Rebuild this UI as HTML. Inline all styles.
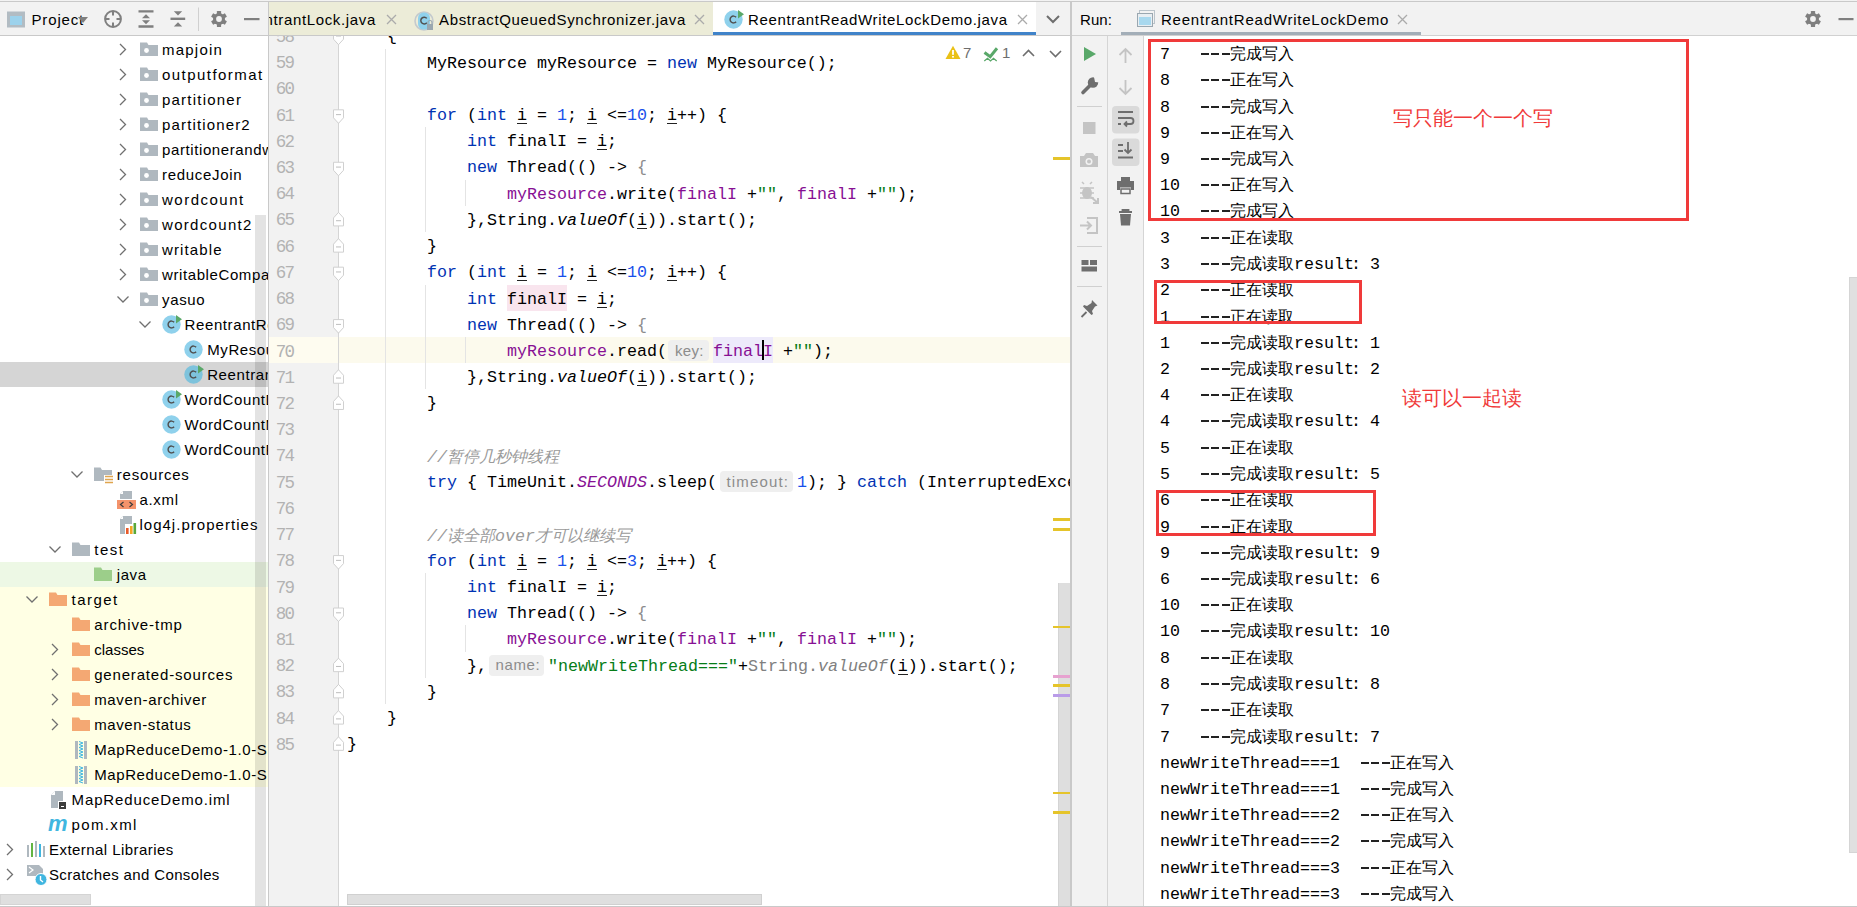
<!DOCTYPE html><html><head><meta charset="utf-8"><style>
*{margin:0;padding:0;box-sizing:border-box}
html,body{width:1857px;height:907px;overflow:hidden;background:#fff}
body{position:relative;font-family:'Liberation Sans', sans-serif;color:#000}
.a{position:absolute}
.ui{font-family:'Liberation Sans', sans-serif;font-size:16px;white-space:pre;line-height:20px}
.mono{font-family:'Liberation Mono', monospace;font-size:16.67px;white-space:pre;line-height:26px}
.kw{color:#0033B3}
.num{color:#1750EB}
.fld{color:#871094}
.it{font-style:italic}
.cmt{color:#9A9A9A;font-style:italic}
.str{color:#067D17}
.gry{color:#8C8C8C}
.u{background:linear-gradient(#222,#222) no-repeat 0 calc(100% - 1px)/100% 1px}
.inl{display:inline-block;background:#EBEBEB;color:#808080;font-family:'Liberation Sans', sans-serif;font-size:15px;border-radius:4px;line-height:20px;vertical-align:1px;text-align:center}
.cjk{display:inline-block;font-family:'Liberation Sans', sans-serif;font-size:16px;letter-spacing:0}
</style></head><body>
<div class="a" style="left:0;top:0;width:1857px;height:1px;background:#F2F2F2"></div>
<div class="a" style="left:0;top:1px;width:1857px;height:1px;background:#C9C9C9"></div>
<div class="a" style="left:0;top:2px;width:268px;height:33px;background:#F2F2F2"></div>
<div class="a" style="left:269px;top:2px;width:444px;height:33px;background:#ECECD8"></div>
<div class="a" style="left:713px;top:2px;width:323px;height:33px;background:#fff"></div>
<div class="a" style="left:713px;top:32px;width:323px;height:3px;background:#4083C9"></div>
<div class="a" style="left:1036px;top:2px;width:34px;height:33px;background:#F2F2F2"></div>
<div class="a" style="left:1072px;top:2px;width:785px;height:33px;background:#F2F2F2"></div>
<div class="a" style="left:0;top:35px;width:1070px;height:1px;background:#C9C9C9"></div>
<div class="a" style="left:1072px;top:35px;width:785px;height:1px;background:#D1D1D1"></div>
<div class="a" style="left:268px;top:2px;width:1px;height:904px;background:#C9C9C9"></div>
<div class="a" style="left:1070px;top:2px;width:2px;height:904px;background:#C9C9C9"></div>
<div class="a" style="left:0;top:906px;width:1857px;height:1px;background:#C9C9C9"></div>
<svg class="a" style="left:0;top:0" width="268" height="35"><rect x="7" y="11.5" width="18" height="16" fill="#B2BCC3"/><rect x="10" y="16" width="12" height="9" fill="#9CD2EC"/><circle cx="113" cy="19" r="7.9" fill="none" stroke="#7F7F7F" stroke-width="2"/><path d="M113 11 V15.5 M113 22.5 V27 M105 19 H109.5 M116.5 19 H121" stroke="#7F7F7F" stroke-width="2"/><path d="M138.5 11.4 H153.5 M138.5 26.5 H153.5" stroke="#7F7F7F" stroke-width="2.4"/><path d="M142 18.3 L146 14.2 L150 18.3 Z M142 20.2 L146 24.3 L150 20.2 Z" fill="#7F7F7F"/><path d="M170.5 18.8 H185.2" stroke="#7F7F7F" stroke-width="2.4"/><path d="M173.8 11.3 L178 15.6 L182.2 11.3 Z M173.8 26.6 L178 22.3 L182.2 26.6 Z" fill="#7F7F7F"/><rect x="198" y="7.5" width="1" height="23.5" fill="#D0D0D0"/><g transform="translate(219,19)"><circle r="6" fill="#7F7F7F"/><rect x="-2.1" y="-8" width="4.2" height="4.5" rx="0.6" fill="#7F7F7F" transform="rotate(0)"/><rect x="-2.1" y="-8" width="4.2" height="4.5" rx="0.6" fill="#7F7F7F" transform="rotate(60)"/><rect x="-2.1" y="-8" width="4.2" height="4.5" rx="0.6" fill="#7F7F7F" transform="rotate(120)"/><rect x="-2.1" y="-8" width="4.2" height="4.5" rx="0.6" fill="#7F7F7F" transform="rotate(180)"/><rect x="-2.1" y="-8" width="4.2" height="4.5" rx="0.6" fill="#7F7F7F" transform="rotate(240)"/><rect x="-2.1" y="-8" width="4.2" height="4.5" rx="0.6" fill="#7F7F7F" transform="rotate(300)"/><circle r="2.9" fill="#F2F2F2"/></g><rect x="244" y="18" width="15.5" height="2.2" fill="#7F7F7F"/></svg>
<div class="a ui" style="left:31.5px;top:9.8px;font-size:15px;letter-spacing:0.85px">Project</div>
<svg class="a" style="left:76px;top:15px" width="14" height="10"><path d="M2 2 L12 2 L7 8 Z" fill="#7F7F7F"/></svg>
<div class="a ui" style="left:269px;top:10px;width:444px;height:24px;overflow:hidden"><span class="a" style="left:-34px;top:0;font-size:15px;letter-spacing:0.65px">ReentrantLock.java</span></div>
<svg class="a" style="left:386px;top:14px" width="11" height="11"><path d="M1 1 L10 10 M10 1 L1 10" stroke="#ABABAB" stroke-width="1.3"/></svg>
<svg class="a" style="left:414px;top:10px" width="22" height="22"><circle cx="10" cy="11" r="9" fill="none" stroke="#C4CACE" stroke-width="1.6"/><rect x="4" y="2.5" width="12" height="17" rx="5.5" fill="#8FD1EC"/><path d="M12.8 8.4 A3.4 3.4 0 1 0 12.8 12.8" fill="none" stroke="#505050" stroke-width="1.45"/><path d="M14 14 V12.5 A2 2 0 0 1 18 12.5 V14" fill="none" stroke="#9AA7B0" stroke-width="1.2"/><rect x="13" y="14" width="6" height="6" fill="#9AA7B0"/></svg>
<div class="a ui" style="left:439px;top:10px;font-size:15px;letter-spacing:0.65px">AbstractQueuedSynchronizer.java</div>
<svg class="a" style="left:694px;top:14px" width="11" height="11"><path d="M1 1 L10 10 M10 1 L1 10" stroke="#ABABAB" stroke-width="1.3"/></svg>
<svg class="a" style="left:724px;top:8px" width="22" height="22"><circle cx="9.5" cy="11.5" r="9.2" fill="#8FD1EC"/><path d="M12.1 9.3 A3.4 3.4 0 1 0 12.1 13.7" fill="none" stroke="#505050" stroke-width="1.45"/><path d="M14 2 L20 6.2 L14 10.4 Z" fill="#59A869"/></svg>
<div class="a ui" style="left:748px;top:10px;font-size:15px;letter-spacing:0.64px">ReentrantReadWriteLockDemo.java</div>
<svg class="a" style="left:1017px;top:14px" width="11" height="11"><path d="M1 1 L10 10 M10 1 L1 10" stroke="#ABABAB" stroke-width="1.3"/></svg>
<svg class="a" style="left:1045px;top:13px" width="16" height="12"><path d="M2 3 L8 9 L14 3" fill="none" stroke="#6E6E6E" stroke-width="2"/></svg>
<div class="a ui" style="left:1080px;top:10px;font-size:15px;letter-spacing:0.1px">Run:</div>
<svg class="a" style="left:1136px;top:9px" width="20" height="20"><rect x="3.5" y="1.5" width="15" height="13" fill="none" stroke="#B9C3CA" stroke-width="1"/><rect x="1.5" y="4.5" width="15" height="13" fill="#E8EEF2" stroke="#9AA7B0" stroke-width="1"/><rect x="3" y="8" width="12" height="8" fill="#A8D8EE"/></svg>
<div class="a ui" style="left:1161px;top:10px;font-size:15px;letter-spacing:0.77px">ReentrantReadWriteLockDemo</div>
<svg class="a" style="left:1397px;top:14px" width="11" height="11"><path d="M1 1 L10 10 M10 1 L1 10" stroke="#ABABAB" stroke-width="1.3"/></svg>
<div class="a" style="left:1121px;top:32px;width:300px;height:3px;background:#A3AEB8"></div>
<svg class="a" style="left:1790px;top:0" width="67" height="35"><g transform="translate(23,19)"><circle r="6" fill="#7F7F7F"/><rect x="-2.1" y="-8" width="4.2" height="4.5" rx="0.6" fill="#7F7F7F" transform="rotate(0)"/><rect x="-2.1" y="-8" width="4.2" height="4.5" rx="0.6" fill="#7F7F7F" transform="rotate(60)"/><rect x="-2.1" y="-8" width="4.2" height="4.5" rx="0.6" fill="#7F7F7F" transform="rotate(120)"/><rect x="-2.1" y="-8" width="4.2" height="4.5" rx="0.6" fill="#7F7F7F" transform="rotate(180)"/><rect x="-2.1" y="-8" width="4.2" height="4.5" rx="0.6" fill="#7F7F7F" transform="rotate(240)"/><rect x="-2.1" y="-8" width="4.2" height="4.5" rx="0.6" fill="#7F7F7F" transform="rotate(300)"/><circle r="2.9" fill="#F2F2F2"/></g><rect x="48.5" y="18" width="15" height="2.2" fill="#7F7F7F"/></svg>
<div class="a" style="left:0;top:362px;width:268px;height:25px;background:#D5D5D5"></div>
<div class="a" style="left:0;top:562px;width:268px;height:25px;background:#EDF8E5"></div>
<div class="a" style="left:0;top:587px;width:268px;height:200px;background:#FFFFE4"></div>
<div class="a" style="left:0;top:36px;width:268px;height:870px;overflow:hidden"><div class="a" style="left:0;top:-36px;width:268px;height:906px">
<svg class="a" style="left:116.5px;top:37px" width="12" height="25"><path d="M3 7 L8.5 12.5 L3 18" fill="none" stroke="#707070" stroke-width="1.3"/></svg>
<svg class="a" style="left:139.5px;top:37px" width="20" height="25"><path d="M0 5.5 H7 L8.5 8 H18 V19 H0 Z" fill="#AFB8BF"/><circle cx="6.5" cy="13.5" r="2.4" fill="#fff"/></svg>
<div class="a ui" style="left:162.0px;top:39.6px;font-size:15px;letter-spacing:1.220px">mapjoin</div>
<svg class="a" style="left:116.5px;top:62px" width="12" height="25"><path d="M3 7 L8.5 12.5 L3 18" fill="none" stroke="#707070" stroke-width="1.3"/></svg>
<svg class="a" style="left:139.5px;top:62px" width="20" height="25"><path d="M0 5.5 H7 L8.5 8 H18 V19 H0 Z" fill="#AFB8BF"/><circle cx="6.5" cy="13.5" r="2.4" fill="#fff"/></svg>
<div class="a ui" style="left:162.0px;top:64.6px;font-size:15px;letter-spacing:1.452px">outputformat</div>
<svg class="a" style="left:116.5px;top:87px" width="12" height="25"><path d="M3 7 L8.5 12.5 L3 18" fill="none" stroke="#707070" stroke-width="1.3"/></svg>
<svg class="a" style="left:139.5px;top:87px" width="20" height="25"><path d="M0 5.5 H7 L8.5 8 H18 V19 H0 Z" fill="#AFB8BF"/><circle cx="6.5" cy="13.5" r="2.4" fill="#fff"/></svg>
<div class="a ui" style="left:162.0px;top:89.6px;font-size:15px;letter-spacing:1.220px">partitioner</div>
<svg class="a" style="left:116.5px;top:112px" width="12" height="25"><path d="M3 7 L8.5 12.5 L3 18" fill="none" stroke="#707070" stroke-width="1.3"/></svg>
<svg class="a" style="left:139.5px;top:112px" width="20" height="25"><path d="M0 5.5 H7 L8.5 8 H18 V19 H0 Z" fill="#AFB8BF"/><circle cx="6.5" cy="13.5" r="2.4" fill="#fff"/></svg>
<div class="a ui" style="left:162.0px;top:114.6px;font-size:15px;letter-spacing:1.152px">partitioner2</div>
<svg class="a" style="left:116.5px;top:137px" width="12" height="25"><path d="M3 7 L8.5 12.5 L3 18" fill="none" stroke="#707070" stroke-width="1.3"/></svg>
<svg class="a" style="left:139.5px;top:137px" width="20" height="25"><path d="M0 5.5 H7 L8.5 8 H18 V19 H0 Z" fill="#AFB8BF"/><circle cx="6.5" cy="13.5" r="2.4" fill="#fff"/></svg>
<div class="a ui" style="left:162.0px;top:139.6px;font-size:15px;letter-spacing:0.600px">partitionerandwritableComparable</div>
<svg class="a" style="left:116.5px;top:162px" width="12" height="25"><path d="M3 7 L8.5 12.5 L3 18" fill="none" stroke="#707070" stroke-width="1.3"/></svg>
<svg class="a" style="left:139.5px;top:162px" width="20" height="25"><path d="M0 5.5 H7 L8.5 8 H18 V19 H0 Z" fill="#AFB8BF"/><circle cx="6.5" cy="13.5" r="2.4" fill="#fff"/></svg>
<div class="a ui" style="left:162.0px;top:164.6px;font-size:15px;letter-spacing:0.700px">reduceJoin</div>
<svg class="a" style="left:116.5px;top:187px" width="12" height="25"><path d="M3 7 L8.5 12.5 L3 18" fill="none" stroke="#707070" stroke-width="1.3"/></svg>
<svg class="a" style="left:139.5px;top:187px" width="20" height="25"><path d="M0 5.5 H7 L8.5 8 H18 V19 H0 Z" fill="#AFB8BF"/><circle cx="6.5" cy="13.5" r="2.4" fill="#fff"/></svg>
<div class="a ui" style="left:162.0px;top:189.6px;font-size:15px;letter-spacing:1.495px">wordcount</div>
<svg class="a" style="left:116.5px;top:212px" width="12" height="25"><path d="M3 7 L8.5 12.5 L3 18" fill="none" stroke="#707070" stroke-width="1.3"/></svg>
<svg class="a" style="left:139.5px;top:212px" width="20" height="25"><path d="M0 5.5 H7 L8.5 8 H18 V19 H0 Z" fill="#AFB8BF"/><circle cx="6.5" cy="13.5" r="2.4" fill="#fff"/></svg>
<div class="a ui" style="left:162.0px;top:214.6px;font-size:15px;letter-spacing:1.314px">wordcount2</div>
<svg class="a" style="left:116.5px;top:237px" width="12" height="25"><path d="M3 7 L8.5 12.5 L3 18" fill="none" stroke="#707070" stroke-width="1.3"/></svg>
<svg class="a" style="left:139.5px;top:237px" width="20" height="25"><path d="M0 5.5 H7 L8.5 8 H18 V19 H0 Z" fill="#AFB8BF"/><circle cx="6.5" cy="13.5" r="2.4" fill="#fff"/></svg>
<div class="a ui" style="left:162.0px;top:239.6px;font-size:15px;letter-spacing:1.113px">writable</div>
<svg class="a" style="left:116.5px;top:262px" width="12" height="25"><path d="M3 7 L8.5 12.5 L3 18" fill="none" stroke="#707070" stroke-width="1.3"/></svg>
<svg class="a" style="left:139.5px;top:262px" width="20" height="25"><path d="M0 5.5 H7 L8.5 8 H18 V19 H0 Z" fill="#AFB8BF"/><circle cx="6.5" cy="13.5" r="2.4" fill="#fff"/></svg>
<div class="a ui" style="left:162.0px;top:264.6px;font-size:15px;letter-spacing:0.600px">writableComparable</div>
<svg class="a" style="left:115.5px;top:287px" width="14" height="25"><path d="M1.5 9.5 L7 15 L12.5 9.5" fill="none" stroke="#707070" stroke-width="1.3"/></svg>
<svg class="a" style="left:139.5px;top:287px" width="20" height="25"><path d="M0 5.5 H7 L8.5 8 H18 V19 H0 Z" fill="#AFB8BF"/><circle cx="6.5" cy="13.5" r="2.4" fill="#fff"/></svg>
<div class="a ui" style="left:162.0px;top:289.6px;font-size:15px;letter-spacing:0.670px">yasuo</div>
<svg class="a" style="left:138.1px;top:312px" width="14" height="25"><path d="M1.5 9.5 L7 15 L12.5 9.5" fill="none" stroke="#707070" stroke-width="1.3"/></svg>
<svg class="a" style="left:161.6px;top:313px" width="22" height="22"><circle cx="9.5" cy="11.5" r="9.2" fill="#8FD1EC"/><path d="M12.1 9.3 A3.4 3.4 0 1 0 12.1 13.7" fill="none" stroke="#505050" stroke-width="1.45"/><path d="M14 2 L20 6.2 L14 10.4 Z" fill="#59A869"/></svg>
<div class="a ui" style="left:184.6px;top:314.6px;font-size:15px;letter-spacing:0.600px">ReentrantReadWriteLockDemo</div>
<svg class="a" style="left:184.2px;top:338px" width="22" height="22"><circle cx="9.5" cy="11.5" r="9.2" fill="#8FD1EC"/><path d="M12.1 9.3 A3.4 3.4 0 1 0 12.1 13.7" fill="none" stroke="#505050" stroke-width="1.45"/></svg>
<div class="a ui" style="left:207.2px;top:339.6px;font-size:15px;letter-spacing:0.600px">MyResource</div>
<svg class="a" style="left:184.2px;top:363px" width="22" height="22"><circle cx="9.5" cy="11.5" r="9.2" fill="#7EC3DC"/><path d="M12.1 9.3 A3.4 3.4 0 1 0 12.1 13.7" fill="none" stroke="#505050" stroke-width="1.45"/><path d="M14 2 L20 6.2 L14 10.4 Z" fill="#59A869"/></svg>
<div class="a ui" style="left:207.2px;top:364.6px;font-size:15px;letter-spacing:0.600px">ReentrantReadWriteLockDemo</div>
<svg class="a" style="left:161.6px;top:388px" width="22" height="22"><circle cx="9.5" cy="11.5" r="9.2" fill="#8FD1EC"/><path d="M12.1 9.3 A3.4 3.4 0 1 0 12.1 13.7" fill="none" stroke="#505050" stroke-width="1.45"/><path d="M14 2 L20 6.2 L14 10.4 Z" fill="#59A869"/></svg>
<div class="a ui" style="left:184.6px;top:389.6px;font-size:15px;letter-spacing:0.600px">WordCountDriver</div>
<svg class="a" style="left:161.6px;top:413px" width="22" height="22"><circle cx="9.5" cy="11.5" r="9.2" fill="#8FD1EC"/><path d="M12.1 9.3 A3.4 3.4 0 1 0 12.1 13.7" fill="none" stroke="#505050" stroke-width="1.45"/></svg>
<div class="a ui" style="left:184.6px;top:414.6px;font-size:15px;letter-spacing:0.600px">WordCountMapper</div>
<svg class="a" style="left:161.6px;top:438px" width="22" height="22"><circle cx="9.5" cy="11.5" r="9.2" fill="#8FD1EC"/><path d="M12.1 9.3 A3.4 3.4 0 1 0 12.1 13.7" fill="none" stroke="#505050" stroke-width="1.45"/></svg>
<div class="a ui" style="left:184.6px;top:439.6px;font-size:15px;letter-spacing:0.600px">WordCountReducer</div>
<svg class="a" style="left:70.3px;top:462px" width="14" height="25"><path d="M1.5 9.5 L7 15 L12.5 9.5" fill="none" stroke="#707070" stroke-width="1.3"/></svg>
<svg class="a" style="left:94.3px;top:462px" width="22" height="25"><path d="M0 5.5 H6.5 L8 8 H18 V19 H0 Z" fill="#AFB8BF"/><rect x="10" y="13" width="10" height="10" fill="#fff"/><path d="M11 14.5 H19 M11 17.5 H19 M11 20.5 H19" stroke="#E0A54E" stroke-width="1.5"/></svg>
<div class="a ui" style="left:116.8px;top:464.6px;font-size:15px;letter-spacing:0.770px">resources</div>
<svg class="a" style="left:116.9px;top:487px" width="22" height="25"><path d="M6 4 H15 V12 H3 V7 Z" fill="#AFB8BF"/><path d="M3 7 L6 4 V7 Z" fill="#fff"/><rect x="0" y="13" width="19" height="9" fill="#F4936B"/><path d="M6.5 15 L3.5 17.5 L6.5 20 M12.5 15 L15.5 17.5 L12.5 20" fill="none" stroke="#3C3C3C" stroke-width="1.2"/></svg>
<div class="a ui" style="left:139.4px;top:489.6px;font-size:15px;letter-spacing:0.720px">a.xml</div>
<svg class="a" style="left:116.9px;top:512px" width="22" height="25"><path d="M6 4 H15 V22 H3 V7 Z" fill="#AFB8BF"/><path d="M3 7 L6 4 V7 Z" fill="#fff"/><rect x="8" y="12" width="11" height="11" fill="#fff"/><rect x="9" y="16" width="2.6" height="6" fill="#E85A2A"/><rect x="13" y="14" width="2.6" height="8" fill="#F5A623"/><rect x="16.5" y="11" width="2.6" height="11" fill="#59A83A"/></svg>
<div class="a ui" style="left:139.4px;top:514.6px;font-size:15px;letter-spacing:1.030px">log4j.properties</div>
<svg class="a" style="left:47.7px;top:537px" width="14" height="25"><path d="M1.5 9.5 L7 15 L12.5 9.5" fill="none" stroke="#707070" stroke-width="1.3"/></svg>
<svg class="a" style="left:71.7px;top:537px" width="20" height="25"><path d="M0 5.5 H7 L8.5 8 H18 V19 H0 Z" fill="#AFB8BF"/></svg>
<div class="a ui" style="left:94.2px;top:539.6px;font-size:15px;letter-spacing:1.537px">test</div>
<svg class="a" style="left:94.3px;top:562px" width="20" height="25"><path d="M0 5.5 H7 L8.5 8 H18 V19 H0 Z" fill="#9CCE8A"/></svg>
<div class="a ui" style="left:116.8px;top:564.6px;font-size:15px;letter-spacing:0.570px">java</div>
<svg class="a" style="left:25.1px;top:587px" width="14" height="25"><path d="M1.5 9.5 L7 15 L12.5 9.5" fill="none" stroke="#707070" stroke-width="1.3"/></svg>
<svg class="a" style="left:49.1px;top:587px" width="20" height="25"><path d="M0 5.5 H7 L8.5 8 H18 V19 H0 Z" fill="#F4A873"/></svg>
<div class="a ui" style="left:71.6px;top:589.6px;font-size:15px;letter-spacing:1.430px">target</div>
<svg class="a" style="left:71.7px;top:612px" width="20" height="25"><path d="M0 5.5 H7 L8.5 8 H18 V19 H0 Z" fill="#F4A873"/></svg>
<div class="a ui" style="left:94.2px;top:614.6px;font-size:15px;letter-spacing:0.940px">archive-tmp</div>
<svg class="a" style="left:48.7px;top:637px" width="12" height="25"><path d="M3 7 L8.5 12.5 L3 18" fill="none" stroke="#707070" stroke-width="1.3"/></svg>
<svg class="a" style="left:71.7px;top:637px" width="20" height="25"><path d="M0 5.5 H7 L8.5 8 H18 V19 H0 Z" fill="#F4A873"/></svg>
<div class="a ui" style="left:94.2px;top:639.6px;font-size:15px;letter-spacing:0.020px">classes</div>
<svg class="a" style="left:48.7px;top:662px" width="12" height="25"><path d="M3 7 L8.5 12.5 L3 18" fill="none" stroke="#707070" stroke-width="1.3"/></svg>
<svg class="a" style="left:71.7px;top:662px" width="20" height="25"><path d="M0 5.5 H7 L8.5 8 H18 V19 H0 Z" fill="#F4A873"/></svg>
<div class="a ui" style="left:94.2px;top:664.6px;font-size:15px;letter-spacing:0.826px">generated-sources</div>
<svg class="a" style="left:48.7px;top:687px" width="12" height="25"><path d="M3 7 L8.5 12.5 L3 18" fill="none" stroke="#707070" stroke-width="1.3"/></svg>
<svg class="a" style="left:71.7px;top:687px" width="20" height="25"><path d="M0 5.5 H7 L8.5 8 H18 V19 H0 Z" fill="#F4A873"/></svg>
<div class="a ui" style="left:94.2px;top:689.6px;font-size:15px;letter-spacing:0.670px">maven-archiver</div>
<svg class="a" style="left:48.7px;top:712px" width="12" height="25"><path d="M3 7 L8.5 12.5 L3 18" fill="none" stroke="#707070" stroke-width="1.3"/></svg>
<svg class="a" style="left:71.7px;top:712px" width="20" height="25"><path d="M0 5.5 H7 L8.5 8 H18 V19 H0 Z" fill="#F4A873"/></svg>
<div class="a ui" style="left:94.2px;top:714.6px;font-size:15px;letter-spacing:0.600px">maven-status</div>
<svg class="a" style="left:71.7px;top:737px" width="22" height="25"><rect x="3" y="4" width="3" height="18" fill="#AFB8BF"/><rect x="12" y="4" width="3" height="18" fill="#AFB8BF"/><path d="M7 4.5 L11 6 L7 7.5 L11 9 L7 10.5 L11 12 L7 13.5 L11 15 L7 16.5 L11 18 L7 19.5 L11 21" fill="none" stroke="#40B6E0" stroke-width="1"/></svg>
<div class="a ui" style="left:94.2px;top:739.6px;font-size:15px;letter-spacing:0.600px">MapReduceDemo-1.0-SNAPSHOT.jar</div>
<svg class="a" style="left:71.7px;top:762px" width="22" height="25"><rect x="3" y="4" width="3" height="18" fill="#AFB8BF"/><rect x="12" y="4" width="3" height="18" fill="#AFB8BF"/><path d="M7 4.5 L11 6 L7 7.5 L11 9 L7 10.5 L11 12 L7 13.5 L11 15 L7 16.5 L11 18 L7 19.5 L11 21" fill="none" stroke="#40B6E0" stroke-width="1"/></svg>
<div class="a ui" style="left:94.2px;top:764.6px;font-size:15px;letter-spacing:0.600px">MapReduceDemo-1.0-SNAPSHOT-jar-with-dependencies.jar</div>
<svg class="a" style="left:49.1px;top:787px" width="22" height="25"><path d="M6 4 H14 V21 H2 V8 Z" fill="#AFB8BF"/><path d="M2 8 L6 4 V8 Z" fill="#fff"/><rect x="9" y="14" width="9" height="9" fill="#fff"/><rect x="10" y="15" width="7" height="7" fill="#3C3C3C"/><rect x="12" y="19" width="3" height="1" fill="#fff"/></svg>
<div class="a ui" style="left:71.6px;top:789.6px;font-size:15px;letter-spacing:0.864px">MapReduceDemo.iml</div>
<div class="a" style="left:48.1px;top:811px;font-family:'Liberation Sans', sans-serif;font-weight:bold;font-style:italic;font-size:22px;color:#40B6E0;line-height:25px">m</div>
<div class="a ui" style="left:71.6px;top:814.6px;font-size:15px;letter-spacing:1.337px">pom.xml</div>
<svg class="a" style="left:3.5px;top:837px" width="12" height="25"><path d="M3 7 L8.5 12.5 L3 18" fill="none" stroke="#707070" stroke-width="1.3"/></svg>
<svg class="a" style="left:26.5px;top:837px" width="22" height="25"><rect x="0" y="8" width="2" height="12" fill="#AFB8BF"/><rect x="4" y="6" width="2" height="14" fill="#62B543"/><rect x="8" y="4" width="2" height="16" fill="#AFB8BF"/><rect x="12" y="7" width="2" height="13" fill="#40B6E0"/><rect x="16" y="9" width="2" height="11" fill="#AFB8BF"/></svg>
<div class="a ui" style="left:49.0px;top:839.6px;font-size:15px;letter-spacing:0.446px">External Libraries</div>
<svg class="a" style="left:3.5px;top:862px" width="12" height="25"><path d="M3 7 L8.5 12.5 L3 18" fill="none" stroke="#707070" stroke-width="1.3"/></svg>
<svg class="a" style="left:26.5px;top:862px" width="22" height="25"><path d="M0 3 H12 L16 7 V14 H0 Z" fill="#AFB8BF"/><path d="M2 5 L6 8 L2 11" fill="none" stroke="#fff" stroke-width="1.2"/><circle cx="14" cy="17.5" r="6" fill="#40B6E0" stroke="#fff" stroke-width="1"/><path d="M13.5 14 V18 L16 20" fill="none" stroke="#fff" stroke-width="1.4"/></svg>
<div class="a ui" style="left:49.0px;top:864.6px;font-size:15px;letter-spacing:0.370px">Scratches and Consoles</div>
</div></div>
<div class="a" style="left:255px;top:215px;width:11px;height:691px;background:rgba(0,0,0,0.11)"></div>
<div class="a" style="left:0;top:894px;width:91px;height:11px;background:#DFDFDF;border:1px solid #D4D4D4"></div>
<div class="a" style="left:269px;top:36px;width:70px;height:870px;background:#F2F2F2"></div>
<div class="a" style="left:269px;top:337.02px;width:70px;height:26px;background:#FEFCF0"></div>
<div class="a" style="left:339px;top:337.02px;width:731px;height:26px;background:#FCFAED"></div>
<div class="a" style="left:338px;top:36px;width:1px;height:870px;background:#D5D5D5"></div>
<div class="a" style="left:269px;top:36px;width:801px;height:870px;overflow:hidden"><div class="a" style="left:-269px;top:-36px;width:1070px;height:906px">
<div class="a mono" style="left:253px;top:23.88px;width:40px;text-align:right;color:#B2B2B2;font-size:17.5px;letter-spacing:-1.9px;line-height:26px">58</div>
<div class="a mono" style="left:253px;top:50.10px;width:40px;text-align:right;color:#B2B2B2;font-size:17.5px;letter-spacing:-1.9px;line-height:26px">59</div>
<div class="a mono" style="left:253px;top:76.32px;width:40px;text-align:right;color:#B2B2B2;font-size:17.5px;letter-spacing:-1.9px;line-height:26px">60</div>
<div class="a mono" style="left:253px;top:102.54px;width:40px;text-align:right;color:#B2B2B2;font-size:17.5px;letter-spacing:-1.9px;line-height:26px">61</div>
<div class="a mono" style="left:253px;top:128.76px;width:40px;text-align:right;color:#B2B2B2;font-size:17.5px;letter-spacing:-1.9px;line-height:26px">62</div>
<div class="a mono" style="left:253px;top:154.98px;width:40px;text-align:right;color:#B2B2B2;font-size:17.5px;letter-spacing:-1.9px;line-height:26px">63</div>
<div class="a mono" style="left:253px;top:181.20px;width:40px;text-align:right;color:#B2B2B2;font-size:17.5px;letter-spacing:-1.9px;line-height:26px">64</div>
<div class="a mono" style="left:253px;top:207.42px;width:40px;text-align:right;color:#B2B2B2;font-size:17.5px;letter-spacing:-1.9px;line-height:26px">65</div>
<div class="a mono" style="left:253px;top:233.64px;width:40px;text-align:right;color:#B2B2B2;font-size:17.5px;letter-spacing:-1.9px;line-height:26px">66</div>
<div class="a mono" style="left:253px;top:259.86px;width:40px;text-align:right;color:#B2B2B2;font-size:17.5px;letter-spacing:-1.9px;line-height:26px">67</div>
<div class="a mono" style="left:253px;top:286.08px;width:40px;text-align:right;color:#B2B2B2;font-size:17.5px;letter-spacing:-1.9px;line-height:26px">68</div>
<div class="a mono" style="left:253px;top:312.30px;width:40px;text-align:right;color:#B2B2B2;font-size:17.5px;letter-spacing:-1.9px;line-height:26px">69</div>
<div class="a mono" style="left:253px;top:338.52px;width:40px;text-align:right;color:#B2B2B2;font-size:17.5px;letter-spacing:-1.9px;line-height:26px">70</div>
<div class="a mono" style="left:253px;top:364.74px;width:40px;text-align:right;color:#B2B2B2;font-size:17.5px;letter-spacing:-1.9px;line-height:26px">71</div>
<div class="a mono" style="left:253px;top:390.96px;width:40px;text-align:right;color:#B2B2B2;font-size:17.5px;letter-spacing:-1.9px;line-height:26px">72</div>
<div class="a mono" style="left:253px;top:417.18px;width:40px;text-align:right;color:#B2B2B2;font-size:17.5px;letter-spacing:-1.9px;line-height:26px">73</div>
<div class="a mono" style="left:253px;top:443.40px;width:40px;text-align:right;color:#B2B2B2;font-size:17.5px;letter-spacing:-1.9px;line-height:26px">74</div>
<div class="a mono" style="left:253px;top:469.62px;width:40px;text-align:right;color:#B2B2B2;font-size:17.5px;letter-spacing:-1.9px;line-height:26px">75</div>
<div class="a mono" style="left:253px;top:495.84px;width:40px;text-align:right;color:#B2B2B2;font-size:17.5px;letter-spacing:-1.9px;line-height:26px">76</div>
<div class="a mono" style="left:253px;top:522.06px;width:40px;text-align:right;color:#B2B2B2;font-size:17.5px;letter-spacing:-1.9px;line-height:26px">77</div>
<div class="a mono" style="left:253px;top:548.28px;width:40px;text-align:right;color:#B2B2B2;font-size:17.5px;letter-spacing:-1.9px;line-height:26px">78</div>
<div class="a mono" style="left:253px;top:574.50px;width:40px;text-align:right;color:#B2B2B2;font-size:17.5px;letter-spacing:-1.9px;line-height:26px">79</div>
<div class="a mono" style="left:253px;top:600.72px;width:40px;text-align:right;color:#B2B2B2;font-size:17.5px;letter-spacing:-1.9px;line-height:26px">80</div>
<div class="a mono" style="left:253px;top:626.94px;width:40px;text-align:right;color:#B2B2B2;font-size:17.5px;letter-spacing:-1.9px;line-height:26px">81</div>
<div class="a mono" style="left:253px;top:653.16px;width:40px;text-align:right;color:#B2B2B2;font-size:17.5px;letter-spacing:-1.9px;line-height:26px">82</div>
<div class="a mono" style="left:253px;top:679.38px;width:40px;text-align:right;color:#B2B2B2;font-size:17.5px;letter-spacing:-1.9px;line-height:26px">83</div>
<div class="a mono" style="left:253px;top:705.60px;width:40px;text-align:right;color:#B2B2B2;font-size:17.5px;letter-spacing:-1.9px;line-height:26px">84</div>
<div class="a mono" style="left:253px;top:731.82px;width:40px;text-align:right;color:#B2B2B2;font-size:17.5px;letter-spacing:-1.9px;line-height:26px">85</div>
<svg class="a" style="left:0;top:0" width="360" height="906"><path d="M333.5 31.18 H343.5 V39.18 L338.5 44.68 L333.5 39.18 Z" fill="#fff" stroke="#D0D0D0" stroke-width="1" stroke-linejoin="miter"/><path d="M336 35.98 H341" stroke="#BDBDBD" stroke-width="1"/></svg>
<svg class="a" style="left:0;top:0" width="360" height="906"><path d="M333.5 109.84 H343.5 V117.84 L338.5 123.34 L333.5 117.84 Z" fill="#fff" stroke="#D0D0D0" stroke-width="1" stroke-linejoin="miter"/><path d="M336 114.64 H341" stroke="#BDBDBD" stroke-width="1"/></svg>
<svg class="a" style="left:0;top:0" width="360" height="906"><path d="M333.5 162.28 H343.5 V170.28 L338.5 175.78 L333.5 170.28 Z" fill="#fff" stroke="#D0D0D0" stroke-width="1" stroke-linejoin="miter"/><path d="M336 167.08 H341" stroke="#BDBDBD" stroke-width="1"/></svg>
<svg class="a" style="left:0;top:0" width="360" height="906"><path d="M333.5 225.92 H343.5 V217.92 L338.5 212.42 L333.5 217.92 Z" fill="#fff" stroke="#D0D0D0" stroke-width="1" stroke-linejoin="miter"/><path d="M336 220.72 H341" stroke="#BDBDBD" stroke-width="1"/></svg>
<svg class="a" style="left:0;top:0" width="360" height="906"><path d="M333.5 252.14 H343.5 V244.14 L338.5 238.64 L333.5 244.14 Z" fill="#fff" stroke="#D0D0D0" stroke-width="1" stroke-linejoin="miter"/><path d="M336 246.94 H341" stroke="#BDBDBD" stroke-width="1"/></svg>
<svg class="a" style="left:0;top:0" width="360" height="906"><path d="M333.5 267.16 H343.5 V275.16 L338.5 280.66 L333.5 275.16 Z" fill="#fff" stroke="#D0D0D0" stroke-width="1" stroke-linejoin="miter"/><path d="M336 271.96 H341" stroke="#BDBDBD" stroke-width="1"/></svg>
<svg class="a" style="left:0;top:0" width="360" height="906"><path d="M333.5 319.60 H343.5 V327.60 L338.5 333.10 L333.5 327.60 Z" fill="#fff" stroke="#D0D0D0" stroke-width="1" stroke-linejoin="miter"/><path d="M336 324.40 H341" stroke="#BDBDBD" stroke-width="1"/></svg>
<svg class="a" style="left:0;top:0" width="360" height="906"><path d="M333.5 383.24 H343.5 V375.24 L338.5 369.74 L333.5 375.24 Z" fill="#fff" stroke="#D0D0D0" stroke-width="1" stroke-linejoin="miter"/><path d="M336 378.04 H341" stroke="#BDBDBD" stroke-width="1"/></svg>
<svg class="a" style="left:0;top:0" width="360" height="906"><path d="M333.5 409.46 H343.5 V401.46 L338.5 395.96 L333.5 401.46 Z" fill="#fff" stroke="#D0D0D0" stroke-width="1" stroke-linejoin="miter"/><path d="M336 404.26 H341" stroke="#BDBDBD" stroke-width="1"/></svg>
<svg class="a" style="left:0;top:0" width="360" height="906"><path d="M333.5 555.58 H343.5 V563.58 L338.5 569.08 L333.5 563.58 Z" fill="#fff" stroke="#D0D0D0" stroke-width="1" stroke-linejoin="miter"/><path d="M336 560.38 H341" stroke="#BDBDBD" stroke-width="1"/></svg>
<svg class="a" style="left:0;top:0" width="360" height="906"><path d="M333.5 608.02 H343.5 V616.02 L338.5 621.52 L333.5 616.02 Z" fill="#fff" stroke="#D0D0D0" stroke-width="1" stroke-linejoin="miter"/><path d="M336 612.82 H341" stroke="#BDBDBD" stroke-width="1"/></svg>
<svg class="a" style="left:0;top:0" width="360" height="906"><path d="M333.5 671.66 H343.5 V663.66 L338.5 658.16 L333.5 663.66 Z" fill="#fff" stroke="#D0D0D0" stroke-width="1" stroke-linejoin="miter"/><path d="M336 666.46 H341" stroke="#BDBDBD" stroke-width="1"/></svg>
<svg class="a" style="left:0;top:0" width="360" height="906"><path d="M333.5 697.88 H343.5 V689.88 L338.5 684.38 L333.5 689.88 Z" fill="#fff" stroke="#D0D0D0" stroke-width="1" stroke-linejoin="miter"/><path d="M336 692.68 H341" stroke="#BDBDBD" stroke-width="1"/></svg>
<svg class="a" style="left:0;top:0" width="360" height="906"><path d="M333.5 724.10 H343.5 V716.10 L338.5 710.60 L333.5 716.10 Z" fill="#fff" stroke="#D0D0D0" stroke-width="1" stroke-linejoin="miter"/><path d="M336 718.90 H341" stroke="#BDBDBD" stroke-width="1"/></svg>
<svg class="a" style="left:0;top:0" width="360" height="906"><path d="M333.5 750.32 H343.5 V742.32 L338.5 736.82 L333.5 742.32 Z" fill="#fff" stroke="#D0D0D0" stroke-width="1" stroke-linejoin="miter"/><path d="M336 745.12 H341" stroke="#BDBDBD" stroke-width="1"/></svg>
<div class="a" style="left:385px;top:48.60px;width:1px;height:655.50px;background:#E4E4E4"></div>
<div class="a" style="left:425px;top:127.26px;width:1px;height:104.88px;background:#E4E4E4"></div>
<div class="a" style="left:425px;top:284.58px;width:1px;height:104.88px;background:#E4E4E4"></div>
<div class="a" style="left:425px;top:573.00px;width:1px;height:104.88px;background:#E4E4E4"></div>
<div class="a" style="left:465px;top:179.70px;width:1px;height:26.22px;background:#E4E4E4"></div>
<div class="a" style="left:465px;top:337.02px;width:1px;height:26.22px;background:#E4E4E4"></div>
<div class="a" style="left:465px;top:625.44px;width:1px;height:26.22px;background:#E4E4E4"></div>
<div class="a mono" style="left:387.00px;top:24px;">{</div>
<div class="a mono" style="left:427.00px;top:51px;">MyResource myResource = <span class="kw">new</span> MyResource();</div>
<div class="a mono" style="left:427.00px;top:103px;"><span class="kw">for</span> (<span class="kw">int</span> <span class="u">i</span> = <span class="num">1</span>; <span class="u">i</span> &lt;=<span class="num">10</span>; <span class="u">i</span>++) {</div>
<div class="a mono" style="left:467.00px;top:129px;"><span class="kw">int</span> finalI = <span class="u">i</span>;</div>
<div class="a mono" style="left:467.00px;top:155px;"><span class="kw">new</span> Thread(() -&gt; <span class="gry">{</span></div>
<div class="a mono" style="left:507.00px;top:182px;"><span class="fld">myResource</span>.write(<span class="fld">finalI</span> +<span class="str">""</span>, <span class="fld">finalI</span> +<span class="str">""</span>);</div>
<div class="a mono" style="left:467.00px;top:208px;">},String.<span class="it">valueOf</span>(<span class="u">i</span>)).start();</div>
<div class="a mono" style="left:427.00px;top:234px;">}</div>
<div class="a mono" style="left:427.00px;top:260px;"><span class="kw">for</span> (<span class="kw">int</span> <span class="u">i</span> = <span class="num">1</span>; <span class="u">i</span> &lt;=<span class="num">10</span>; <span class="u">i</span>++) {</div>
<div class="a" style="left:507px;top:285.08px;width:60px;height:25.5px;background:#F9E5EE"></div>
<div class="a mono" style="left:467.00px;top:287px;"><span class="kw">int</span> finalI = <span class="u">i</span>;</div>
<div class="a mono" style="left:467.00px;top:313px;"><span class="kw">new</span> Thread(() -&gt; <span class="gry">{</span></div>
<div class="a mono" style="left:507.00px;top:339px;"><span class="fld">myResource</span>.read(</div>
<div class="a" style="left:668px;top:340.02px;width:41px;height:21px;background:#EFEFEF;border-radius:4px"></div>
<div class="a ui" style="left:675px;top:340.52px;color:#8C8C8C;font-size:15px;letter-spacing:0.3px">key:</div>
<div class="a" style="left:713px;top:337.02px;width:60px;height:26px;background:#EDEAFB"></div>
<div class="a mono" style="left:713px;top:339px"><span class="fld">finalI</span> +<span class="str">""</span>);</div>
<div class="a" style="left:762px;top:340.02px;width:2px;height:20px;background:#000"></div>
<div class="a mono" style="left:467.00px;top:365px;">},String.<span class="it">valueOf</span>(<span class="u">i</span>)).start();</div>
<div class="a mono" style="left:427.00px;top:391px;">}</div>
<div class="a mono" style="left:427.00px;top:444px;"><span class="cmt">//<span class="cjk" style="font-size:16px">暂停几秒钟线程</span></span></div>
<div class="a mono" style="left:427.00px;top:470px;"><span class="kw">try</span> { TimeUnit.<span class="fld it">SECONDS</span>.sleep(</div>
<div class="a" style="left:720px;top:471.12px;width:73px;height:21px;background:#EFEFEF;border-radius:4px"></div>
<div class="a ui" style="left:726.5px;top:471.62px;color:#8C8C8C;font-size:15px;letter-spacing:1.15px">timeout:</div>
<div class="a mono" style="left:797px;top:470px"><span class="num">1</span>); } <span class="kw">catch</span> (InterruptedException e) { e.printStackTrace(); }</div>
<div class="a mono" style="left:427.00px;top:523px;"><span class="cmt">//<span class="cjk">读全部</span>over<span class="cjk">才可以继续写</span></span></div>
<div class="a mono" style="left:427.00px;top:549px;"><span class="kw">for</span> (<span class="kw">int</span> <span class="u">i</span> = <span class="num">1</span>; <span class="u">i</span> &lt;=<span class="num">3</span>; <span class="u">i</span>++) {</div>
<div class="a mono" style="left:467.00px;top:575px;"><span class="kw">int</span> finalI = <span class="u">i</span>;</div>
<div class="a mono" style="left:467.00px;top:601px;"><span class="kw">new</span> Thread(() -&gt; <span class="gry">{</span></div>
<div class="a mono" style="left:507.00px;top:627px;"><span class="fld">myResource</span>.write(<span class="fld">finalI</span> +<span class="str">""</span>, <span class="fld">finalI</span> +<span class="str">""</span>);</div>
<div class="a mono" style="left:467.00px;top:654px;">},</div>
<div class="a" style="left:489px;top:654.66px;width:55px;height:21px;background:#EFEFEF;border-radius:4px"></div>
<div class="a ui" style="left:495.5px;top:655.16px;color:#8C8C8C;font-size:15px;letter-spacing:0.6px">name:</div>
<div class="a mono" style="left:548px;top:654px"><span class="str">"newWriteThread==="</span>+<span style="color:#808080">String.<span class="it">valueOf</span></span>(<span class="u">i</span>)).start();</div>
<div class="a mono" style="left:427.00px;top:680px;">}</div>
<div class="a mono" style="left:387.00px;top:706px;">}</div>
<div class="a mono" style="left:347.00px;top:732px;">}</div>
</div></div>
<div class="a" style="left:347px;top:894px;width:415px;height:11px;background:#DFDFDF;border:1px solid #D0D0D0"></div>
<div class="a" style="left:1058px;top:583px;width:12px;height:323px;background:#DEDEDE;border-left:1px solid #D4D4D4"></div>
<div class="a" style="left:1053px;top:157.0px;width:17px;height:2.5px;background:#E5C42A"></div>
<div class="a" style="left:1053px;top:518.0px;width:17px;height:2.5px;background:#E5C42A"></div>
<div class="a" style="left:1053px;top:528.0px;width:17px;height:2.5px;background:#E5C42A"></div>
<div class="a" style="left:1053px;top:625.5px;width:17px;height:2.5px;background:#E5C42A"></div>
<div class="a" style="left:1053px;top:675.0px;width:17px;height:2.5px;background:#E7A2D0"></div>
<div class="a" style="left:1053px;top:684.0px;width:17px;height:2.5px;background:#E5C42A"></div>
<div class="a" style="left:1053px;top:694.0px;width:17px;height:2.5px;background:#B99BE8"></div>
<div class="a" style="left:1053px;top:791.5px;width:17px;height:2.5px;background:#E5C42A"></div>
<div class="a" style="left:1053px;top:811.0px;width:17px;height:2.5px;background:#E5C42A"></div>
<svg class="a" style="left:940px;top:42px" width="130" height="22"><path d="M13 3.8 L20.5 17 H5.5 Z" fill="#EAC117"/><rect x="12.1" y="8" width="1.8" height="4.8" fill="#fff"/><rect x="12.1" y="14" width="1.8" height="1.6" fill="#fff"/><path d="M44.5 10.5 L50.2 14.6 L57 6.3" fill="none" stroke="#59A869" stroke-width="3"/><path d="M44.3 19 L47.5 16.3 L50.5 19 L53.5 16.3 L56.7 19" fill="none" stroke="#59A869" stroke-width="1.3"/><path d="M83 14 L88.5 8.5 L94 14" fill="none" stroke="#6E6E6E" stroke-width="1.6"/><path d="M110 9 L115.5 14.5 L121 9" fill="none" stroke="#6E6E6E" stroke-width="1.6"/></svg>
<div class="a ui" style="left:963px;top:43px;color:#6E6E6E;font-size:15px">7</div>
<div class="a ui" style="left:1002px;top:43px;color:#6E6E6E;font-size:15px">1</div>
<div class="a" style="left:1072px;top:36px;width:35px;height:870px;background:#F2F2F2"></div>
<div class="a" style="left:1107px;top:36px;width:1px;height:870px;background:#D5D5D5"></div>
<div class="a" style="left:1108px;top:36px;width:35px;height:870px;background:#F2F2F2"></div>
<div class="a" style="left:1143px;top:36px;width:1px;height:870px;background:#D5D5D5"></div>
<svg class="a" style="left:1072px;top:36px" width="72" height="300"><path d="M12 11 L24 18 L12 25 Z" fill="#59A869"/><path d="M11 56.5 L19.5 48" stroke="#6E6E6E" stroke-width="3.6" stroke-linecap="round"/><circle cx="21" cy="46.5" r="5.2" fill="#6E6E6E"/><path d="M22 41 L27.5 41 L27.5 46.5 L23 46 Z" fill="#F2F2F2" transform="rotate(0)"/><path d="M21.5 40 L28 40 L28 46.5 Z" fill="#F2F2F2"/><rect x="5" y="70" width="25" height="1" fill="#D0D0D0"/><rect x="11" y="86" width="12.5" height="12" fill="#C4C4C4"/><path d="M8 120 H12 L14 117 H21 L23 120 H26 V131 H8 Z" fill="#C4C4C4"/><circle cx="17" cy="125.5" r="3.5" fill="#F2F2F2"/><circle cx="17" cy="125.5" r="2" fill="#C4C4C4"/><ellipse cx="15" cy="157" rx="5" ry="6" fill="#C4C4C4"/><path d="M8 152 L22 152 M8 157 H22 M8 162 H22 M12 148 L10 146 M18 148 L20 146" stroke="#C4C4C4" stroke-width="1.5"/><path d="M19 161 L26 167 M26 162 V167 H21" stroke="#C4C4C4" stroke-width="2" fill="none"/><path d="M15 182 H25 V197 H15" fill="none" stroke="#C4C4C4" stroke-width="2"/><path d="M8 189.5 H19 M15 185.5 L19 189.5 L15 193.5" fill="none" stroke="#C4C4C4" stroke-width="2"/><rect x="5" y="210" width="25" height="1" fill="#D0D0D0"/><rect x="9.5" y="224" width="7" height="5" fill="#6E6E6E"/><rect x="18" y="224" width="7" height="5" fill="#6E6E6E"/><rect x="9.5" y="230.5" width="15.5" height="5" fill="#6E6E6E"/><rect x="5" y="250" width="25" height="1" fill="#D0D0D0"/><path d="M20 264 L25.5 269.5 L23 270.5 L20 275 L21 278 L19.5 279 L11 270.5 L12 269 L15 270 L19.5 267 Z" fill="#6E6E6E"/><path d="M9.5 281 L14.5 276" stroke="#6E6E6E" stroke-width="1.8"/><path d="M53.5 13 V27 M47.5 19 L53.5 13 L59.5 19" fill="none" stroke="#C4C4C4" stroke-width="1.8"/><path d="M53.5 44 V58 M47.5 52 L53.5 58 L59.5 52" fill="none" stroke="#C4C4C4" stroke-width="1.8"/><rect x="40" y="70" width="27.5" height="27.5" rx="4" fill="#DADADA"/><path d="M46 76 H61 M46 82 H58.5 A3 3 0 0 1 58.5 88 H53 M55 85.5 L52.5 88 L55 90.5 M46 88 H49" fill="none" stroke="#6E6E6E" stroke-width="1.8"/><rect x="40" y="102.5" width="27.5" height="27.5" rx="4" fill="#DADADA"/><path d="M46 109 H51 M46 115 H51 M46 121.5 H61 M56 106 V117 M52.5 113.5 L56 117 L59.5 113.5" fill="none" stroke="#6E6E6E" stroke-width="1.8"/><path d="M49 141 H58 V145 H49 Z" fill="#6E6E6E"/><path d="M45 145 H62 V154 H59 V151.5 H48 V154 H45 Z" fill="#6E6E6E"/><rect x="49" y="153" width="9" height="4.5" fill="none" stroke="#6E6E6E" stroke-width="1.5"/><path d="M47 176 H60 M50.5 176 V174 H56.5 V176" fill="none" stroke="#6E6E6E" stroke-width="1.8"/><path d="M48 178 H59 L58 189.5 H49 Z" fill="#6E6E6E"/></svg>
<div class="a mono" style="left:1160px;top:41px">7      <span class="cjk" style="width:64px">完成写入</span></div>
<div class="a" style="left:1200.7px;top:53px;width:29px;height:2px;background:repeating-linear-gradient(90deg,#222 0 8px,transparent 8px 10.3px)"></div>
<div class="a mono" style="left:1160px;top:67px">8      <span class="cjk" style="width:64px">正在写入</span></div>
<div class="a" style="left:1200.7px;top:79px;width:29px;height:2px;background:repeating-linear-gradient(90deg,#222 0 8px,transparent 8px 10.3px)"></div>
<div class="a mono" style="left:1160px;top:94px">8      <span class="cjk" style="width:64px">完成写入</span></div>
<div class="a" style="left:1200.7px;top:106px;width:29px;height:2px;background:repeating-linear-gradient(90deg,#222 0 8px,transparent 8px 10.3px)"></div>
<div class="a mono" style="left:1160px;top:120px">9      <span class="cjk" style="width:64px">正在写入</span></div>
<div class="a" style="left:1200.7px;top:132px;width:29px;height:2px;background:repeating-linear-gradient(90deg,#222 0 8px,transparent 8px 10.3px)"></div>
<div class="a mono" style="left:1160px;top:146px">9      <span class="cjk" style="width:64px">完成写入</span></div>
<div class="a" style="left:1200.7px;top:158px;width:29px;height:2px;background:repeating-linear-gradient(90deg,#222 0 8px,transparent 8px 10.3px)"></div>
<div class="a mono" style="left:1160px;top:172px">10     <span class="cjk" style="width:64px">正在写入</span></div>
<div class="a" style="left:1200.7px;top:184px;width:29px;height:2px;background:repeating-linear-gradient(90deg,#222 0 8px,transparent 8px 10.3px)"></div>
<div class="a mono" style="left:1160px;top:198px">10     <span class="cjk" style="width:64px">完成写入</span></div>
<div class="a" style="left:1200.7px;top:210px;width:29px;height:2px;background:repeating-linear-gradient(90deg,#222 0 8px,transparent 8px 10.3px)"></div>
<div class="a mono" style="left:1160px;top:225px">3      <span class="cjk" style="width:64px">正在读取</span></div>
<div class="a" style="left:1200.7px;top:237px;width:29px;height:2px;background:repeating-linear-gradient(90deg,#222 0 8px,transparent 8px 10.3px)"></div>
<div class="a mono" style="left:1160px;top:251px">3      <span class="cjk" style="width:64px">完成读取</span>result<span style="display:inline-block;width:16px;text-indent:-3px">:</span>3</div>
<div class="a" style="left:1200.7px;top:263px;width:29px;height:2px;background:repeating-linear-gradient(90deg,#222 0 8px,transparent 8px 10.3px)"></div>
<div class="a mono" style="left:1160px;top:277px">2      <span class="cjk" style="width:64px">正在读取</span></div>
<div class="a" style="left:1200.7px;top:289px;width:29px;height:2px;background:repeating-linear-gradient(90deg,#222 0 8px,transparent 8px 10.3px)"></div>
<div class="a mono" style="left:1160px;top:304px">1      <span class="cjk" style="width:64px">正在读取</span></div>
<div class="a" style="left:1200.7px;top:316px;width:29px;height:2px;background:repeating-linear-gradient(90deg,#222 0 8px,transparent 8px 10.3px)"></div>
<div class="a mono" style="left:1160px;top:330px">1      <span class="cjk" style="width:64px">完成读取</span>result<span style="display:inline-block;width:16px;text-indent:-3px">:</span>1</div>
<div class="a" style="left:1200.7px;top:342px;width:29px;height:2px;background:repeating-linear-gradient(90deg,#222 0 8px,transparent 8px 10.3px)"></div>
<div class="a mono" style="left:1160px;top:356px">2      <span class="cjk" style="width:64px">完成读取</span>result<span style="display:inline-block;width:16px;text-indent:-3px">:</span>2</div>
<div class="a" style="left:1200.7px;top:368px;width:29px;height:2px;background:repeating-linear-gradient(90deg,#222 0 8px,transparent 8px 10.3px)"></div>
<div class="a mono" style="left:1160px;top:382px">4      <span class="cjk" style="width:64px">正在读取</span></div>
<div class="a" style="left:1200.7px;top:394px;width:29px;height:2px;background:repeating-linear-gradient(90deg,#222 0 8px,transparent 8px 10.3px)"></div>
<div class="a mono" style="left:1160px;top:408px">4      <span class="cjk" style="width:64px">完成读取</span>result<span style="display:inline-block;width:16px;text-indent:-3px">:</span>4</div>
<div class="a" style="left:1200.7px;top:420px;width:29px;height:2px;background:repeating-linear-gradient(90deg,#222 0 8px,transparent 8px 10.3px)"></div>
<div class="a mono" style="left:1160px;top:435px">5      <span class="cjk" style="width:64px">正在读取</span></div>
<div class="a" style="left:1200.7px;top:447px;width:29px;height:2px;background:repeating-linear-gradient(90deg,#222 0 8px,transparent 8px 10.3px)"></div>
<div class="a mono" style="left:1160px;top:461px">5      <span class="cjk" style="width:64px">完成读取</span>result<span style="display:inline-block;width:16px;text-indent:-3px">:</span>5</div>
<div class="a" style="left:1200.7px;top:473px;width:29px;height:2px;background:repeating-linear-gradient(90deg,#222 0 8px,transparent 8px 10.3px)"></div>
<div class="a mono" style="left:1160px;top:487px">6      <span class="cjk" style="width:64px">正在读取</span></div>
<div class="a" style="left:1200.7px;top:499px;width:29px;height:2px;background:repeating-linear-gradient(90deg,#222 0 8px,transparent 8px 10.3px)"></div>
<div class="a mono" style="left:1160px;top:514px">9      <span class="cjk" style="width:64px">正在读取</span></div>
<div class="a" style="left:1200.7px;top:526px;width:29px;height:2px;background:repeating-linear-gradient(90deg,#222 0 8px,transparent 8px 10.3px)"></div>
<div class="a mono" style="left:1160px;top:540px">9      <span class="cjk" style="width:64px">完成读取</span>result<span style="display:inline-block;width:16px;text-indent:-3px">:</span>9</div>
<div class="a" style="left:1200.7px;top:552px;width:29px;height:2px;background:repeating-linear-gradient(90deg,#222 0 8px,transparent 8px 10.3px)"></div>
<div class="a mono" style="left:1160px;top:566px">6      <span class="cjk" style="width:64px">完成读取</span>result<span style="display:inline-block;width:16px;text-indent:-3px">:</span>6</div>
<div class="a" style="left:1200.7px;top:578px;width:29px;height:2px;background:repeating-linear-gradient(90deg,#222 0 8px,transparent 8px 10.3px)"></div>
<div class="a mono" style="left:1160px;top:592px">10     <span class="cjk" style="width:64px">正在读取</span></div>
<div class="a" style="left:1200.7px;top:604px;width:29px;height:2px;background:repeating-linear-gradient(90deg,#222 0 8px,transparent 8px 10.3px)"></div>
<div class="a mono" style="left:1160px;top:618px">10     <span class="cjk" style="width:64px">完成读取</span>result<span style="display:inline-block;width:16px;text-indent:-3px">:</span>10</div>
<div class="a" style="left:1200.7px;top:630px;width:29px;height:2px;background:repeating-linear-gradient(90deg,#222 0 8px,transparent 8px 10.3px)"></div>
<div class="a mono" style="left:1160px;top:645px">8      <span class="cjk" style="width:64px">正在读取</span></div>
<div class="a" style="left:1200.7px;top:657px;width:29px;height:2px;background:repeating-linear-gradient(90deg,#222 0 8px,transparent 8px 10.3px)"></div>
<div class="a mono" style="left:1160px;top:671px">8      <span class="cjk" style="width:64px">完成读取</span>result<span style="display:inline-block;width:16px;text-indent:-3px">:</span>8</div>
<div class="a" style="left:1200.7px;top:683px;width:29px;height:2px;background:repeating-linear-gradient(90deg,#222 0 8px,transparent 8px 10.3px)"></div>
<div class="a mono" style="left:1160px;top:697px">7      <span class="cjk" style="width:64px">正在读取</span></div>
<div class="a" style="left:1200.7px;top:709px;width:29px;height:2px;background:repeating-linear-gradient(90deg,#222 0 8px,transparent 8px 10.3px)"></div>
<div class="a mono" style="left:1160px;top:724px">7      <span class="cjk" style="width:64px">完成读取</span>result<span style="display:inline-block;width:16px;text-indent:-3px">:</span>7</div>
<div class="a" style="left:1200.7px;top:736px;width:29px;height:2px;background:repeating-linear-gradient(90deg,#222 0 8px,transparent 8px 10.3px)"></div>
<div class="a mono" style="left:1160px;top:750px">newWriteThread===1     <span class="cjk" style="width:64px">正在写入</span></div>
<div class="a" style="left:1360.7px;top:762px;width:29px;height:2px;background:repeating-linear-gradient(90deg,#222 0 8px,transparent 8px 10.3px)"></div>
<div class="a mono" style="left:1160px;top:776px">newWriteThread===1     <span class="cjk" style="width:64px">完成写入</span></div>
<div class="a" style="left:1360.7px;top:788px;width:29px;height:2px;background:repeating-linear-gradient(90deg,#222 0 8px,transparent 8px 10.3px)"></div>
<div class="a mono" style="left:1160px;top:802px">newWriteThread===2     <span class="cjk" style="width:64px">正在写入</span></div>
<div class="a" style="left:1360.7px;top:814px;width:29px;height:2px;background:repeating-linear-gradient(90deg,#222 0 8px,transparent 8px 10.3px)"></div>
<div class="a mono" style="left:1160px;top:828px">newWriteThread===2     <span class="cjk" style="width:64px">完成写入</span></div>
<div class="a" style="left:1360.7px;top:840px;width:29px;height:2px;background:repeating-linear-gradient(90deg,#222 0 8px,transparent 8px 10.3px)"></div>
<div class="a mono" style="left:1160px;top:855px">newWriteThread===3     <span class="cjk" style="width:64px">正在写入</span></div>
<div class="a" style="left:1360.7px;top:867px;width:29px;height:2px;background:repeating-linear-gradient(90deg,#222 0 8px,transparent 8px 10.3px)"></div>
<div class="a mono" style="left:1160px;top:881px">newWriteThread===3     <span class="cjk" style="width:64px">完成写入</span></div>
<div class="a" style="left:1360.7px;top:893px;width:29px;height:2px;background:repeating-linear-gradient(90deg,#222 0 8px,transparent 8px 10.3px)"></div>
<div class="a" style="left:1148px;top:39px;width:541px;height:182px;border:3px solid #F03A3A"></div>
<div class="a" style="left:1154px;top:280px;width:208px;height:44px;border:3px solid #F03A3A"></div>
<div class="a" style="left:1156px;top:490px;width:220px;height:46px;border:3px solid #F03A3A"></div>
<div class="a cjk" style="left:1393px;top:105px;font-size:20px;color:#F03A3A;line-height:26px">写只能一个一个写</div>
<div class="a cjk" style="left:1402px;top:385px;font-size:20px;color:#F03A3A;line-height:26px">读可以一起读</div>
<div class="a" style="left:1849px;top:277px;width:8px;height:576px;background:#E0E0E0;border:1px solid #D5D5D5;border-right:0"></div>
</body></html>
